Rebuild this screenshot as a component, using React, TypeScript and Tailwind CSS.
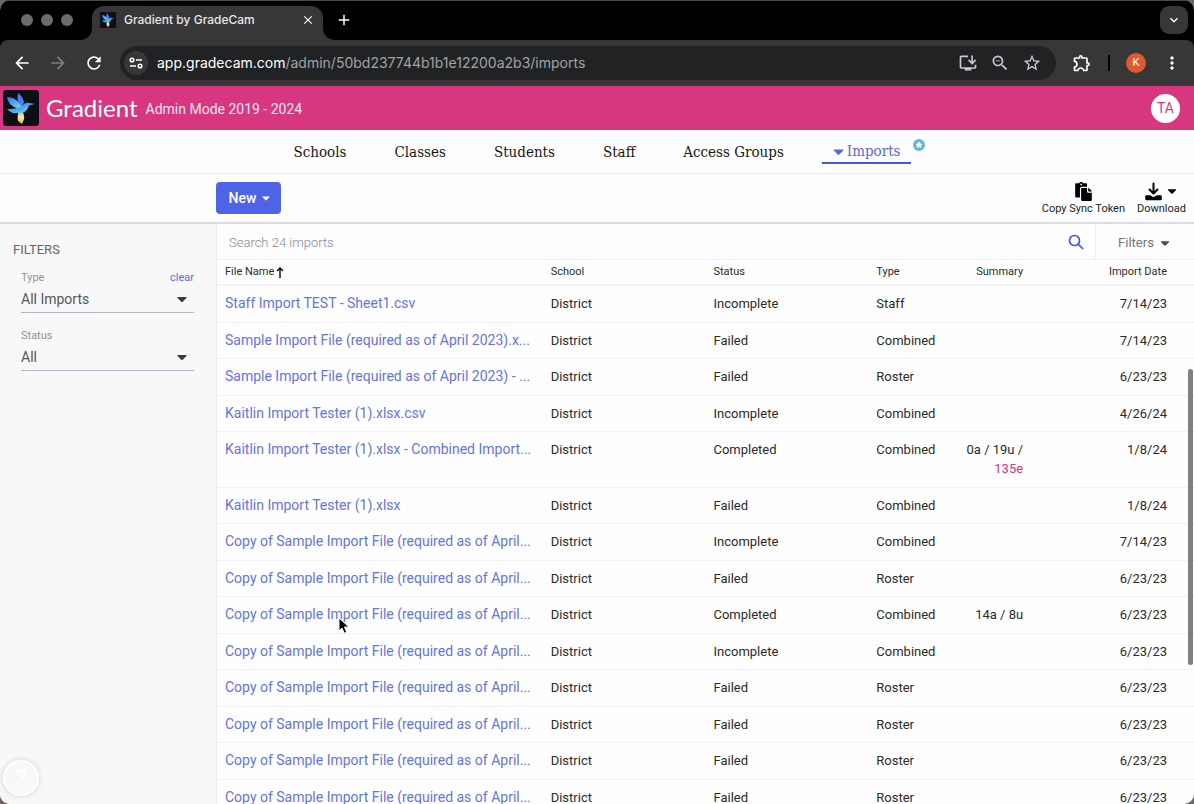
import { FaCaretDown, FaPaste } from "react-icons/fa";
import {
  MdAdd,
  MdArrowBack,
  MdArrowForward,
  MdClose,
  MdExpandMore,
  MdInstallDesktop,
  MdMoreVert,
  MdOutlineExtension,
  MdRefresh,
  MdStarOutline,
  MdZoomOut,
} from "react-icons/md";

type ImportRow = {
  name: string;
  status: string;
  type: string;
  date: string;
  summary?: string;
  errors?: string;
};

const COPY_NAME = "Copy of Sample Import File (required as of April...";

const imports: ImportRow[] = [
  { name: "Staff Import TEST - Sheet1.csv", status: "Incomplete", type: "Staff", date: "7/14/23" },
  { name: "Sample Import File (required as of April 2023).x...", status: "Failed", type: "Combined", date: "7/14/23" },
  { name: "Sample Import File (required as of April 2023) - ...", status: "Failed", type: "Roster", date: "6/23/23" },
  { name: "Kaitlin Import Tester (1).xlsx.csv", status: "Incomplete", type: "Combined", date: "4/26/24" },
  {
    name: "Kaitlin Import Tester (1).xlsx - Combined Import...",
    status: "Completed",
    type: "Combined",
    date: "1/8/24",
    summary: "0a / 19u /",
    errors: "135e",
  },
  { name: "Kaitlin Import Tester (1).xlsx", status: "Failed", type: "Combined", date: "1/8/24" },
  { name: COPY_NAME, status: "Incomplete", type: "Combined", date: "7/14/23" },
  { name: COPY_NAME, status: "Failed", type: "Roster", date: "6/23/23" },
  { name: COPY_NAME, status: "Completed", type: "Combined", date: "6/23/23", summary: "14a / 8u" },
  { name: COPY_NAME, status: "Incomplete", type: "Combined", date: "6/23/23" },
  { name: COPY_NAME, status: "Failed", type: "Roster", date: "6/23/23" },
  { name: COPY_NAME, status: "Failed", type: "Roster", date: "6/23/23" },
  { name: COPY_NAME, status: "Failed", type: "Roster", date: "6/23/23" },
  { name: COPY_NAME, status: "Failed", type: "Roster", date: "6/23/23" },
];

function BirdLogo({ className }: { className: string }) {
  return (
    <svg viewBox="0 0 36 36" className={className} aria-hidden="true">
      <defs>
        <linearGradient id="wing" x1="0" y1="0" x2="1" y2="1">
          <stop offset="0" stopColor="#3b6fe0" />
          <stop offset="0.5" stopColor="#4fa8ee" />
          <stop offset="1" stopColor="#7fe0e6" />
        </linearGradient>
        <linearGradient id="tail" x1="0" y1="0" x2="0" y2="1">
          <stop offset="0" stopColor="#8fdcc4" />
          <stop offset="0.4" stopColor="#f7e6a4" />
          <stop offset="1" stopColor="#f2a35c" />
        </linearGradient>
      </defs>
      <rect width="36" height="36" rx="3" fill="#0d0f14" />
      <path d="M15 3c3 2 5 5 6 9l-1.500 4-3 1c-2-4-2.500-9-1.500-14z" fill="#4a7cea" />
      <path d="M4 7c5 0 9 2 12 6l3 4-4 1.500C9 17 5 13 4 7z" fill="url(#wing)" />
      <path
        d="M4 19c5 0 8 0 11-1.500l4-1.500c2-2.500 4.500-4 7-3l6 1-6 1.300c-1 3.500-3 6-6 7.500-2 1-4 1-6 0C11 24 7 22.500 4 19z"
        fill="url(#wing)"
      />
      <path d="M15.500 22.500c1.500 0.500 3 0.500 4.500 0 1 2.500 1.500 4.500 1 7l-2 4.500-4-3c-0.500-3-0.500-6 0.500-8.500z" fill="url(#tail)" />
    </svg>
  );
}

function BrowserChrome() {
  return (
    <div className="shrink-0 bg-black text-white">
      <div className="flex h-10 items-end border-t border-[#4a4a4a]">
        <div className="flex h-10 items-center gap-2 pl-[21px]">
          <span className="size-3 rounded-full bg-[#6b6b6b]" />
          <span className="size-3 rounded-full bg-[#6b6b6b]" />
          <span className="size-3 rounded-full bg-[#6b6b6b]" />
        </div>
        <svg viewBox="0 0 12 12" className="ml-[7px] size-3" aria-hidden="true">
          <path d="M12 0v12H0C7 12 12 7 12 0z" fill="#373737" />
        </svg>
        <div className="flex h-[34px] w-[231px] items-center rounded-t-xl bg-[#373737] pr-1 pb-1.5 pl-2">
          <BirdLogo className="size-4" />
          <span className="ml-2 flex-1 font-[Inter] text-xs font-medium text-[#e6e6e6]">
            Gradient by GradeCam
          </span>
          <button type="button" aria-label="Close tab" className="mr-1">
            <MdClose className="size-3.5" />
          </button>
        </div>
        <svg viewBox="0 0 12 12" className="size-3" aria-hidden="true">
          <path d="M0 0v12h12C5 12 0 7 0 0z" fill="#373737" />
        </svg>
        <button type="button" aria-label="New tab" className="flex h-10 items-center">
          <MdAdd className="size-[18px]" />
        </button>
        <div className="flex h-10 flex-1 items-center justify-end pr-1.5">
          <button
            type="button"
            aria-label="Search tabs"
            className="flex size-7 items-center justify-center rounded-[9px] bg-[#373737]"
          >
            <MdExpandMore className="size-4" />
          </button>
        </div>
      </div>

      <div className="flex h-[46px] items-center rounded-t-lg bg-[#373737] pr-3 pl-3">
        <button type="button" aria-label="Back" className="mr-4">
          <MdArrowBack className="size-5" />
        </button>
        <button type="button" aria-label="Forward" className="mr-4">
          <MdArrowForward className="size-5 text-[#7d7d7d]" />
        </button>
        <button type="button" aria-label="Reload">
          <MdRefresh className="size-5" />
        </button>
        <div className="ml-4 flex h-[34px] flex-1 items-center rounded-full bg-[#202224] pr-3.5 pl-1">
          <button
            type="button"
            aria-label="Site information"
            className="flex size-6 items-center justify-center rounded-full bg-[#373737]"
          >
            <svg viewBox="0 0 14 12" className="h-3 w-3.5" fill="none" stroke="#fff" strokeWidth="1.5">
              <circle cx="3" cy="3" r="1.8" />
              <path d="M7 3h6M1 9h6" />
              <circle cx="11" cy="9" r="1.8" />
            </svg>
          </button>
          <div className="ml-[9px] flex-1 font-[Inter] text-sm text-[#a0a2a4]">
            <span className="text-white">app.gradecam.com</span>
            /admin/50bd237744b1b1e12200a2b3/imports
          </div>
          <div className="flex items-center gap-3 text-[#c8c8d0]">
            <MdInstallDesktop className="size-5" />
            <MdZoomOut className="size-5" />
            <MdStarOutline className="size-5" />
          </div>
        </div>
        <MdOutlineExtension className="ml-4 size-5" />
        <span className="ml-4 h-4 w-0.5 bg-black" />
        <span className="ml-4 flex size-5 items-center justify-center rounded-full bg-[#dc5a33] font-[Roboto] text-[11px]">
          K
        </span>
        <MdMoreVert className="ml-4 size-5" />
      </div>
    </div>
  );
}

function AppHeader() {
  return (
    <header className="flex h-11 shrink-0 items-center bg-[#d7377e] pr-3.5 pl-[3px] text-white">
      <BirdLogo className="size-9" />
      <span className="ml-[7px] font-[Lato] text-2xl">Gradient</span>
      <span className="ml-2 flex-1 pt-0.5 text-sm text-[#fbe3ee]">Admin Mode 2019 - 2024</span>
      <button type="button" className="size-[29px] rounded-full bg-white text-sm text-[#d7377e]">
        TA
      </button>
    </header>
  );
}

function NavBar() {
  return (
    <nav className="flex h-11 shrink-0 items-center justify-center gap-12 border-b border-[#e8e9f2] pt-0.5 pl-2.5 font-['Roboto_Slab','DejaVu_Serif_Condensed','DejaVu_Serif',serif] text-[15px] text-[#161616]">
      {["Schools", "Classes", "Students", "Staff", "Access Groups"].map((item) => (
        <a key={item} href="#">
          {item}
        </a>
      ))}
      <a
        href="#"
        className="relative -ml-2.5 flex items-center border-b-2 border-[#4657dc] pr-2.5 pl-2 leading-[21px] text-[#5767e0]"
      >
        <FaCaretDown className="size-[17px]" />
        Imports
        <svg viewBox="0 0 12 12" className="absolute -top-0.5 -right-3.5 size-3" aria-hidden="true">
          <circle cx="6" cy="6" r="6" fill="#5cbcd9" />
          <path d="M6 2.3l1.1 2.3 2.5.3-1.8 1.7.5 2.5L6 7.9 3.7 9.1l.5-2.5-1.8-1.7 2.5-.3z" fill="#fff" />
        </svg>
      </a>
    </nav>
  );
}

function ActionBar() {
  return (
    <div className="flex h-[50px] shrink-0 items-center justify-between border-b-2 border-[#dadde6] pr-2 pl-[216px]">
      <button
        type="button"
        className="flex h-8 w-[65px] items-center justify-center gap-1 rounded bg-[#4f63e7] pl-1 text-sm font-medium text-white"
      >
        New
        <FaCaretDown className="size-3" />
      </button>
      <div className="flex gap-3 text-[11px] leading-3 text-[#222]">
        <button type="button" className="flex flex-col items-center gap-0.5">
          <FaPaste className="size-[19px] text-black" />
          Copy Sync Token
        </button>
        <button type="button" className="flex flex-col items-center gap-0.5">
          <span className="flex items-center gap-0.5 text-black">
            <svg
              viewBox="0 0 19 19"
              className="size-[19px]"
              fill="none"
              stroke="currentColor"
              strokeWidth="2"
              strokeLinecap="round"
              strokeLinejoin="round"
            >
              <path d="M9.5 1.5V11M5.5 7.5l4 4 4-4" />
              <path d="M2.5 14.5H6l2 1.5h3l2-1.5h3.5V17h-14z" strokeWidth="2.6" />
            </svg>
            <FaCaretDown className="size-3.5" />
          </span>
          Download
        </button>
      </div>
    </div>
  );
}

function FilterSelect({ id, label, value, clearable }: { id: string; label: string; value: string; clearable?: boolean }) {
  return (
    <div className="mr-[22px] ml-[21px]">
      <div className="flex h-4 items-center justify-between text-[11px] text-[#929292]">
        <label htmlFor={id}>{label}</label>
        {clearable && (
          <button type="button" className="text-[#5c6be0]">
            clear
          </button>
        )}
      </div>
      <div className="relative border-b border-[#b3b4ca]">
        <select id={id} className="block h-[26px] w-full appearance-none text-sm text-[#555]">
          <option>{value}</option>
        </select>
        <FaCaretDown className="pointer-events-none absolute top-[5px] right-1 size-4 text-[#3d3d3d]" />
      </div>
    </div>
  );
}

function Sidebar() {
  return (
    <aside className="relative w-[217px] shrink-0 border-r border-[#ececf2] bg-[#f8f8f9] pt-[17px]">
      <h2 className="mb-[11px] ml-[13px] text-[13px] leading-[18px] text-[#666]">FILTERS</h2>
      <div className="flex flex-col gap-[15px]">
        <FilterSelect id="type-filter" label="Type" value="All Imports" clearable />
        <FilterSelect id="status-filter" label="Status" value="All" />
      </div>
      <button
        type="button"
        aria-label="Help"
        className="absolute bottom-2 left-[3px] size-9 rounded-full border-2 border-white bg-[#f8f8f9] text-2xl leading-8 text-white shadow-[0_0_5px_1px_#dcdcdc]"
      >
        ?
      </button>
    </aside>
  );
}

function SearchBar() {
  return (
    <div className="flex h-9 items-center border-b border-[#f0f0f5]">
      <input
        type="search"
        aria-label="Search imports"
        placeholder="Search 24 imports"
        className="h-full min-w-0 flex-1 pt-0.5 pl-3 text-[13px] font-light outline-none placeholder:text-[#85879c]"
      />
      <button type="button" aria-label="Search" className="mr-[11px]">
        <svg viewBox="0 0 16 16" className="size-4" fill="none" stroke="#4459dc" strokeWidth="1.7">
          <circle cx="6.5" cy="6.5" r="5" />
          <path d="M10.2 10.2L15 15" />
        </svg>
      </button>
      <button
        type="button"
        className="flex h-full w-[99px] items-center justify-center gap-1 border-l border-[#f0f0f5] pt-0.5 text-[13px] text-[#747474]"
      >
        Filters
        <FaCaretDown className="size-3.5 text-[#4d4d4d]" />
      </button>
    </div>
  );
}

function ImportsTable() {
  return (
    <table className="w-full table-fixed text-left text-[#2b2b2b]">
      <thead className="text-[11px]">
        <tr className="h-[25px] border-b-2 border-[#f3f3f7]">
          <th className="w-1/3 pl-2 font-normal">
            <span className="flex items-center gap-0.5">
              File Name
              <svg viewBox="0 0 8 11" className="h-[11px] w-2" fill="none" stroke="#111" strokeWidth="1.5">
                <path d="M4 11V1M1 4l3-3 3 3" />
              </svg>
            </span>
          </th>
          <th className="w-1/6 pl-2 font-normal">School</th>
          <th className="w-1/6 pl-2 font-normal">Status</th>
          <th className="w-1/12 pl-2 font-normal">Type</th>
          <th className="w-1/12 pr-2 text-right font-normal">Summary</th>
          <th className="w-1/6 pr-[27px] text-right font-normal">Import Date</th>
        </tr>
      </thead>
      <tbody className="text-[13px] leading-[19px]">
        {imports.map((row, i) => (
          <tr key={i} className="border-b border-[#f1f1f6] align-top odd:h-[37px] even:h-9">
            <td className="pt-2 pl-2 text-sm leading-[19px] whitespace-nowrap">
              <a href="#" className="text-[#6474e4]">
                {row.name}
              </a>
            </td>
            <td className="pt-2 pl-2">District</td>
            <td className="pt-2 pl-2">{row.status}</td>
            <td className="pt-2 pl-2">{row.type}</td>
            <td className="pt-2 pr-2 text-right">
              {row.summary}
              {row.errors && <div className="pb-[9px] text-[#d7377e]">{row.errors}</div>}
            </td>
            <td className="pt-2 pr-[27px] text-right">{row.date}</td>
          </tr>
        ))}
      </tbody>
    </table>
  );
}

export default function App() {
  return (
    <div className="h-screen bg-[#6e6660]">
      <div className="relative flex h-full flex-col overflow-hidden rounded-[10px] bg-[#fefefe] font-[Roboto,sans-serif]">
        <BrowserChrome />
        <AppHeader />
        <NavBar />
        <ActionBar />
        <div className="flex min-h-0 flex-1">
          <Sidebar />
          <main className="relative min-w-0 flex-1 overflow-hidden">
            <SearchBar />
            <ImportsTable />
            {/* overlay scrollbar thumb */}
            <div className="absolute top-1/4 right-px h-[51%] w-[5px] rounded-full bg-[#808080]" />
          </main>
        </div>
        {/* mouse pointer */}
        <svg viewBox="0 0 12 18" className="absolute top-[617px] left-[338px] h-[18px] w-3" aria-hidden="true">
          <path d="M1 1v13l3-3 2.2 5.2 2.4-1L6.500 10H11z" fill="#000" stroke="#fff" strokeWidth="1" />
        </svg>
      </div>
    </div>
  );
}
